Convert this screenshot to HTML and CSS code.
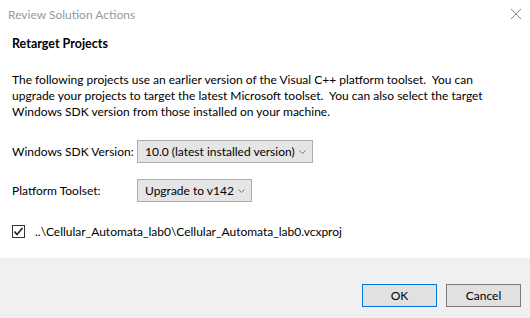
FILE: index.html
```html
<!DOCTYPE html>
<html>
<head>
<meta charset="utf-8">
<link rel="stylesheet" href="styles.css">
</head>
<body>
<div class="dialog">
  <div class="titlebar">
    <span class="title">Review Solution Actions</span>
    <svg class="close" width="12" height="12" viewBox="0 0 12 12"><path d="M1 1 L11 11 M11 1 L1 11" stroke="#8a8a8a" stroke-width="1" fill="none"/></svg>
  </div>
  <div class="content">
    <div class="heading">Retarget Projects</div>
    <p class="desc">The following projects use an earlier version of the Visual C++ platform toolset.&nbsp; You can<br>upgrade your projects to target the latest Microsoft toolset.&nbsp; You can also select the target<br>Windows SDK version from those installed on your machine.</p>
    <div class="row row-sdk">
      <span class="label">Windows SDK Version:</span>
      <div class="select select-sdk"><span>10.0 (latest installed version)</span><svg class="chev" width="7" height="4" viewBox="0 0 7 4"><path d="M0.5 0.5 L3.5 3.5 L6.5 0.5" stroke="#777" fill="none"/></svg></div>
    </div>
    <div class="row row-tool">
      <span class="label">Platform Toolset:</span>
      <div class="select select-tool"><span>Upgrade to v142</span><svg class="chev" width="7" height="4" viewBox="0 0 7 4"><path d="M0.5 0.5 L3.5 3.5 L6.5 0.5" stroke="#777" fill="none"/></svg></div>
    </div>
    <div class="project">
      <span class="check"><svg width="11" height="11" viewBox="0 0 11 11"><path d="M1.5 5.5 L4 8.5 L9.5 2" stroke="#222" stroke-width="1.6" fill="none"/></svg></span>
      <span>..\Cellular_Automata_lab0\Cellular_Automata_lab0.vcxproj</span>
    </div>
  </div>
  <div class="footer">
    <button class="btn btn-default">OK</button>
    <button class="btn">Cancel</button>
  </div>
</div>
</body>
</html>
```
FILE: styles.css
```css
html, body {
  margin: 0;
  padding: 0;
  background: #fff;
}
body {
  width: 530px;
  height: 318px;
  overflow: hidden;
  font-family: Lato, "Noto Sans", sans-serif;
  font-size: 12px;
  color: #000;
}
.dialog {
  display: flex;
  flex-direction: column;
  height: 318px;
}
.titlebar {
  height: 30px;
  display: flex;
  align-items: center;
  justify-content: space-between;
  padding: 0 7px 2px 8px;
  box-sizing: border-box;
}
.title {
  color: #999;
  font-size: 12px;
}
.close {
  margin-right: 1px;
}
.content {
  flex: 1;
  padding: 6px 12px 0 12px;
}
.heading {
  font-weight: bold;
  font-size: 12.5px;
  height: 16px;
  line-height: 16px;
}
.desc {
  margin: 20px 0 0 0;
  line-height: 16px;
  white-space: nowrap;
}
.row {
  display: flex;
  align-items: center;
  white-space: nowrap;
}
.row-sdk {
  margin-top: 20px;
}
.row-tool {
  margin-top: 16px;
}
.label {
  width: 125px;
}
.select {
  height: 23px;
  box-sizing: border-box;
  border: 1px solid #acacac;
  background: #e5e5e5;
  display: flex;
  align-items: center;
  padding: 0 6px 0 7px;
  justify-content: space-between;
}
.select-sdk { width: 176px; }
.select-tool { width: 115px; }
.project {
  display: flex;
  align-items: center;
  margin-top: 22px;
  gap: 10px;
  white-space: nowrap;
}
.check {
  width: 13px;
  height: 13px;
  box-sizing: border-box;
  border: 1px solid #333;
  display: flex;
  align-items: center;
  justify-content: center;
  background: #fff;
}
.footer {
  height: 60px;
  background: #f0f0f0;
  display: flex;
  justify-content: flex-end;
  align-items: flex-start;
  padding: 26px 9px 0 0;
  box-sizing: border-box;
  gap: 9px;
}
.btn {
  width: 75px;
  height: 23px;
  font-family: inherit;
  font-size: 12px;
  background: #e1e1e1;
  border: 1px solid #7a7a7a;
  margin: 0;
  padding: 0;
  color: #000;
}
.btn-default {
  border-color: #0078d7;
}
```
